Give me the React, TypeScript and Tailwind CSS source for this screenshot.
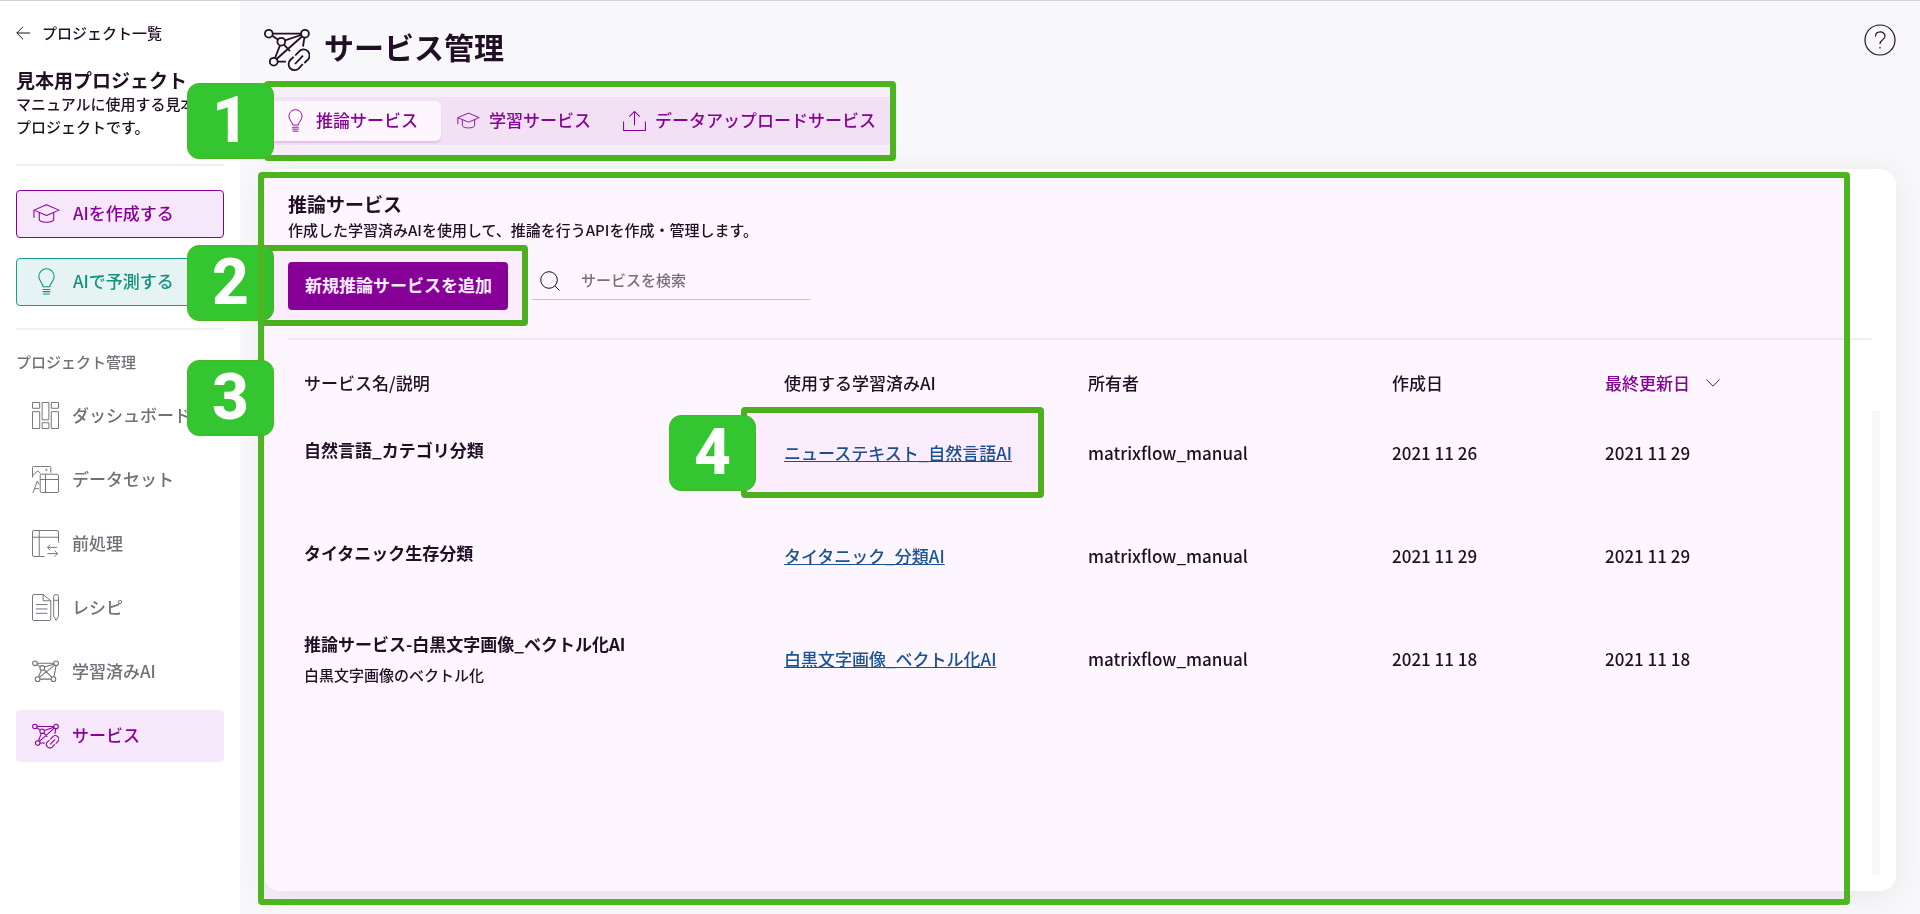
import React from 'react';
import clsx from 'clsx';

type IconProps = { className?: string };

/* ---------- Icons ---------- */

function BulbIcon({ className }: IconProps) {
  return (
    <svg viewBox="0 0 28 28" className={className} fill="none" stroke="currentColor" strokeWidth="1.1" aria-hidden="true">
      <path d="M10.5 19.5C10.5 15.5 6 14 6 8.8a8 8 0 0 1 16 0c0 5.2-4.5 6.7-4.5 10.7z" />
      <path d="M10 22.2h8M10 24.5h8M10.5 27h7" />
    </svg>
  );
}

function CapIcon({ className }: IconProps) {
  return (
    <svg viewBox="0 0 28 28" className={className} fill="none" stroke="currentColor" strokeWidth="1.1" strokeLinejoin="round" aria-hidden="true">
      <path d="M14 5l13 5.5-13 5.5L1 10.5z" />
      <path d="M6.5 13v7c0 1.8 3.5 3 7.5 3s7.5-1.2 7.5-3v-7M1 10.5v8" />
    </svg>
  );
}

function UploadIcon({ className }: IconProps) {
  return (
    <svg viewBox="0 0 24 24" className={className} fill="none" stroke="currentColor" strokeWidth="1.1" aria-hidden="true">
      <path d="M12 17V2.5M6.5 8L12 2.5 17.5 8M.6 13v9.5h22.8V13" />
    </svg>
  );
}

function DashboardIcon({ className }: IconProps) {
  return (
    <svg viewBox="0 0 28 28" className={className} fill="none" stroke="currentColor" aria-hidden="true">
      <path d="M.5.5H8v6H.5zM.5 10H8v17.5H.5zM10.5.5h7v18h-7zM10.5 21.5h7v6h-7zM20 .5h7.5v6H20zM20 10h7.5v17.5H20z" />
    </svg>
  );
}

function DatasetIcon({ className }: IconProps) {
  return (
    <svg viewBox="0 0 28 28" className={className} fill="none" stroke="currentColor" aria-hidden="true">
      <path d="M.5 12V1.5a1 1 0 0 1 1-1h17a1 1 0 0 1 1 1V7" />
      <path d="M.5 10L6 5l3 3M1 28l4.5-12.5L7 19M3 23.5h4" />
      <circle cx="15" cy="4" r=".7" />
      <rect x="8.5" y="8.5" width="19" height="19" rx="1.5" />
      <path d="M8.5 14h19M14 8.5v19" />
    </svg>
  );
}

function PreprocessIcon({ className }: IconProps) {
  return (
    <svg viewBox="0 0 28 28" className={className} fill="none" stroke="currentColor" aria-hidden="true">
      <path d="M27.5 13V2A1.5 1.5 0 0 0 26 .5H2A1.5 1.5 0 0 0 .5 2v24A1.5 1.5 0 0 0 2 27.5h11M.5 7.5h27M7.5.5v27" />
      <path d="M26 18H16M19 15l-3 3 3 3M16 24.5h10.5M23.5 21.5l3 3-3 3" />
    </svg>
  );
}

function RecipeIcon({ className }: IconProps) {
  return (
    <svg viewBox="0 0 28 28" className={className} fill="none" stroke="currentColor" strokeLinejoin="round" aria-hidden="true">
      <path d="M12 .5H2A1.5 1.5 0 0 0 .5 2v24A1.5 1.5 0 0 0 2 27.5h16a1.5 1.5 0 0 0 1.5-1.5V7L11.5.5V7h8" />
      <path d="M4 11h12M4 15.5h12M4 20h12" />
      <path d="M22.5 2.5a2.5 2 0 0 1 5 0V23L25 27.5 22.5 23zM22.5 6.5h5" />
    </svg>
  );
}

function ModelIcon({ className }: IconProps) {
  return (
    <svg viewBox="0 0 46 46" className={className} fill="none" stroke="currentColor" strokeWidth="1.8" aria-hidden="true">
      <circle cx="5" cy="9" r="4" />
      <circle cx="41" cy="9" r="4" />
      <circle cx="17.5" cy="17" r="4" />
      <circle cx="9.5" cy="36" r="4" />
      <circle cx="36.5" cy="36" r="4" />
      <path d="M9 9h28M8.5 11l5.5 4M21 15.5L37 10.5M16 21l-5 11M20.5 20L34 33M12.5 33L38.500 12M13.500 36h19M41 13l-3.500 19" />
    </svg>
  );
}

function ServiceIcon({ className }: IconProps) {
  return (
    <svg viewBox="0 0 46 46" className={className} fill="none" stroke="currentColor" strokeWidth="1.8" aria-hidden="true">
      <circle cx="4.8" cy="7.7" r="3.9" />
      <circle cx="41" cy="7.7" r="3.9" />
      <circle cx="17.3" cy="15.7" r="3.9" />
      <circle cx="9.7" cy="35.7" r="3.9" />
      <path d="M8.7 7.7h28.4M8.2 9.8l5.6 3.6M21 14.4L37.2 9M16 19.4L11 32M20 18.6l6 6.6M12.6 33L38 10.5M13.6 35.7H22M40.4 11.6L39 20.5" />
      <path d="M31.2 29.5l4-4.2a6 6 0 0 1 8.7 8.3l-3.5 3.4M38.800 38l-3.900 4.400a6 6 0 0 1-8.600-8.400l3.300-3.200M31 38l8-8.300" />
    </svg>
  );
}

/* ---------- Manual annotations ---------- */

// Green frame with a light tint, stretched over its relative parent
function Marker({ className }: IconProps) {
  return (
    <div className={clsx('pointer-events-none absolute rounded-sm border-[6px] border-[#4db51f]', className)}>
      <div className="h-full bg-[#fdf6fe] mix-blend-multiply" />
    </div>
  );
}

function Badge({ number, className }: { number: number; className?: string }) {
  return (
    <div
      className={clsx(
        'pointer-events-none absolute flex h-[76px] w-[87px] items-center justify-center rounded-xl border border-[#4db51f] bg-[#34c631] font-[Roboto,sans-serif] text-[64px] leading-[76px] font-extrabold text-white',
        className
      )}
    >
      {number}
    </div>
  );
}

/* ---------- Sidebar ---------- */

const menu = [
  { label: 'ダッシュボード', Icon: DashboardIcon },
  { label: 'データセット', Icon: DatasetIcon },
  { label: '前処理', Icon: PreprocessIcon },
  { label: 'レシピ', Icon: RecipeIcon },
  { label: '学習済みAI', Icon: ModelIcon },
  { label: 'サービス', Icon: ServiceIcon, active: true },
];

function Sidebar() {
  return (
    <aside className="w-60 shrink-0 bg-white px-4 pt-5">
      <a href="#projects" className="flex h-6 items-center gap-3 text-[15px] font-medium">
        <svg viewBox="0 0 14 14" className="size-[14px]" fill="none" stroke="currentColor" aria-hidden="true">
          <path d="M14 7H.8M7 .8L.8 7 7 13.2" />
        </svg>
        プロジェクト一覧
      </a>
      <h2 className="mt-[22px] text-[19px] leading-[25px] font-bold whitespace-nowrap">見本用プロジェクト</h2>
      <p className="text-[15px] leading-[23px] font-medium">
        マニュアルに使用する見本
        <br />
        プロジェクトです。
      </p>
      <div className="mt-[26px] h-[2px] bg-[#f0f0f1]" />

      <div className="mt-6 flex flex-col gap-5">
        <button type="button" className="flex h-12 items-center gap-[13px] rounded border border-[#880099] bg-[#f6e7fa] pb-[2px] pl-4 text-[17px] font-medium text-[#880099]">
          <CapIcon className="size-[27px]" />
          AIを作成する
        </button>
        <button type="button" className="flex h-12 items-center gap-[13px] rounded border border-[#169c8c] bg-[#e5f3f2] pb-[2px] pl-4 text-[17px] font-medium text-[#12917f]">
          <BulbIcon className="size-[27px]" />
          AIで予測する
        </button>
      </div>
      <div className="mt-[22px] h-[2px] bg-[#f0f0f1]" />

      <h3 className="mt-5 text-[15px] leading-6 font-medium text-[#736e79]">プロジェクト管理</h3>
      <nav className="mt-4 flex flex-col gap-3">
        {menu.map(({ label, Icon, active }) => (
          <a
            key={label}
            href="#menu"
            className={clsx(
              'flex h-[52px] items-center gap-[13px] rounded pb-[2px] pl-4 text-[17px] font-medium whitespace-nowrap',
              active ? 'bg-[#f6e7fa] text-[#880099]' : 'text-[#736e79]'
            )}
          >
            <Icon className="size-[27px] shrink-0" />
            {label}
          </a>
        ))}
      </nav>
    </aside>
  );
}

/* ---------- Service tabs ---------- */

function Tabs() {
  return (
    <div className="relative mt-7 flex w-fit">
      <div role="tablist" className="flex h-12 items-center rounded bg-[#f4eaf6] p-1 text-[17px] font-medium text-[#880099]">
        <button type="button" role="tab" aria-selected="true" className="flex h-10 items-center gap-[9px] rounded-md bg-white pr-[23px] pb-[2px] pl-4 shadow-[0_2px_2px_rgba(136,0,153,0.15)]">
          <BulbIcon className="size-[23px]" />
          推論サービス
        </button>
        <button type="button" role="tab" aria-selected="false" className="flex h-10 items-center gap-[9px] px-4 pb-[2px]">
          <CapIcon className="size-[23px]" />
          学習サービス
        </button>
        <button type="button" role="tab" aria-selected="false" className="flex h-10 items-center gap-[9px] px-4 pb-[2px]">
          <UploadIcon className="size-[23px]" />
          データアップロードサービス
        </button>
      </div>
      <Marker className="-top-4 right-0 -bottom-4 left-0" />
      <Badge number={1} className="-top-[14px] -left-[77px]" />
    </div>
  );
}

/* ---------- Service list ---------- */

const services = [
  {
    name: '自然言語_カテゴリ分類',
    model: 'ニューステキスト_自然言語AI',
    owner: 'matrixflow_manual',
    created: '2021 11 26',
    updated: '2021 11 29',
    mark: 4,
  },
  {
    name: 'タイタニック生存分類',
    model: 'タイタニック_分類AI',
    owner: 'matrixflow_manual',
    created: '2021 11 29',
    updated: '2021 11 29',
  },
  {
    name: '推論サービス-白黒文字画像_ベクトル化AI',
    description: '白黒文字画像のベクトル化',
    model: '白黒文字画像_ベクトル化AI',
    owner: 'matrixflow_manual',
    created: '2021 11 18',
    updated: '2021 11 18',
  },
];

function ServiceTable() {
  return (
    <table className="w-full table-fixed text-left text-[17px] font-medium">
      <thead>
        <tr className="h-9">
          <th className="w-[30%] pl-4 font-medium">サービス名/説明</th>
          <th className="w-[19%] pl-4 font-medium">使用する学習済みAI</th>
          <th className="w-[19%] pl-4 font-medium">所有者</th>
          <th className="pl-4 font-medium">作成日</th>
          <th className="w-[299px] pl-4 font-medium">
            <button type="button" className="flex items-center gap-4 text-[#880099]">
              最終更新日
              <svg viewBox="0 0 14 8" className="h-2 w-[14px]" fill="none" stroke="currentColor" aria-hidden="true">
                <path d="M.5.5L7 7.2 13.5.5" />
              </svg>
            </button>
          </th>
        </tr>
      </thead>
      <tbody>
        {services.map((s) => (
          <tr key={s.name} className="h-[103px]">
            <td className="pl-4">
              <p className="mb-[6px] leading-[25px] font-bold">{s.name}</p>
              {s.description && <p className="text-[15px] leading-[25px]">{s.description}</p>}
            </td>
            <td className="pl-4">
              <span className="relative inline-block">
                <a href="#model" className="whitespace-nowrap text-[#1a5594] underline">{s.model}</a>
                {s.mark && (
                  <>
                    <Marker className="-top-[33px] -right-[32px] -bottom-[33px] -left-[43px]" />
                    <Badge number={s.mark} className="-top-[25px] -left-[115px] z-10" />
                  </>
                )}
              </span>
            </td>
            <td className="pl-4">{s.owner}</td>
            <td className="pl-4">{s.created}</td>
            <td className="pl-4">{s.updated}</td>
          </tr>
        ))}
      </tbody>
    </table>
  );
}

function ServicePanel() {
  return (
    <section className="relative mt-6 flex flex-1 flex-col rounded-2xl bg-white pt-[23px] pr-2 pb-4 pl-6 shadow-[0_4px_32px_rgba(0,0,0,0.07)]">
      <h2 className="text-[19px] leading-6 font-bold">推論サービス</h2>
      <p className="text-[15px] leading-7 font-medium">作成した学習済みAIを使用して、推論を行うAPIを作成・管理します。</p>

      <div className="mt-[18px] flex items-start gap-6">
        <div className="relative">
          <button type="button" className="h-12 rounded bg-[#880099] pr-4 pb-[2px] pl-[17px] text-[17px] font-bold text-white">
            新規推論サービスを追加
          </button>
          <Marker className="-top-[17px] -right-[20px] -bottom-4 -left-[30px]" />
          <Badge number={2} className="-top-[17px] -left-[101px]" />
        </div>
        <label className="flex h-[38px] w-[278px] items-center gap-[21px] border-b border-[#ccc6d0] pl-2">
          <svg viewBox="0 0 20 20" className="size-5 shrink-0" fill="none" stroke="currentColor" aria-hidden="true">
            <circle cx="9" cy="9" r="8.3" />
            <path d="M15 15l4.5 4.5" />
          </svg>
          <input
            type="text"
            aria-label="サービスを検索"
            placeholder="サービスを検索"
            className="w-full text-[15px] font-medium outline-none placeholder:text-[#78747c]"
          />
        </label>
      </div>

      <div className="mt-7 mr-4 h-[2px] bg-[#f0eff1]" />
      <div className="relative mt-[25px] flex-1">
        <ServiceTable />
        {/* Scrollbar track */}
        <div className="absolute top-[46px] right-2 bottom-0 w-2 bg-[#f8f8fa]" />
      </div>

      <Marker className="top-[3px] right-[46px] -bottom-[14px] -left-[6px]" />
      <Badge number={3} className="top-[191px] -left-[77px] z-10" />
    </section>
  );
}

export default function App() {
  return (
    <div className="flex min-h-screen border-t border-[#d3d2d6] bg-[#f8f8fa] font-['Noto_Sans_CJK_JP',sans-serif] text-[#210f26]">
      <Sidebar />
      <main className="flex min-w-0 flex-1 flex-col px-6 pt-6 pb-[23px]">
        <header className="flex h-11 items-center gap-[14px]">
          <ServiceIcon className="mt-1 size-[46px]" />
          <h1 className="pb-[2px] text-[30px] leading-[42px] font-bold">サービス管理</h1>
          <button type="button" aria-label="ヘルプ" className="-mt-px ml-auto self-start">
            <svg viewBox="0 0 32 32" className="size-8" fill="none" stroke="currentColor" strokeWidth="1.2" aria-hidden="true">
              <circle cx="16" cy="16" r="15" />
              <path d="M11.5 12.5c0-6 9.5-6 9.5-.5 0 4-5 3.5-5 8M16 23v1.5" />
            </svg>
          </button>
        </header>
        <Tabs />
        <ServicePanel />
      </main>
    </div>
  );
}
